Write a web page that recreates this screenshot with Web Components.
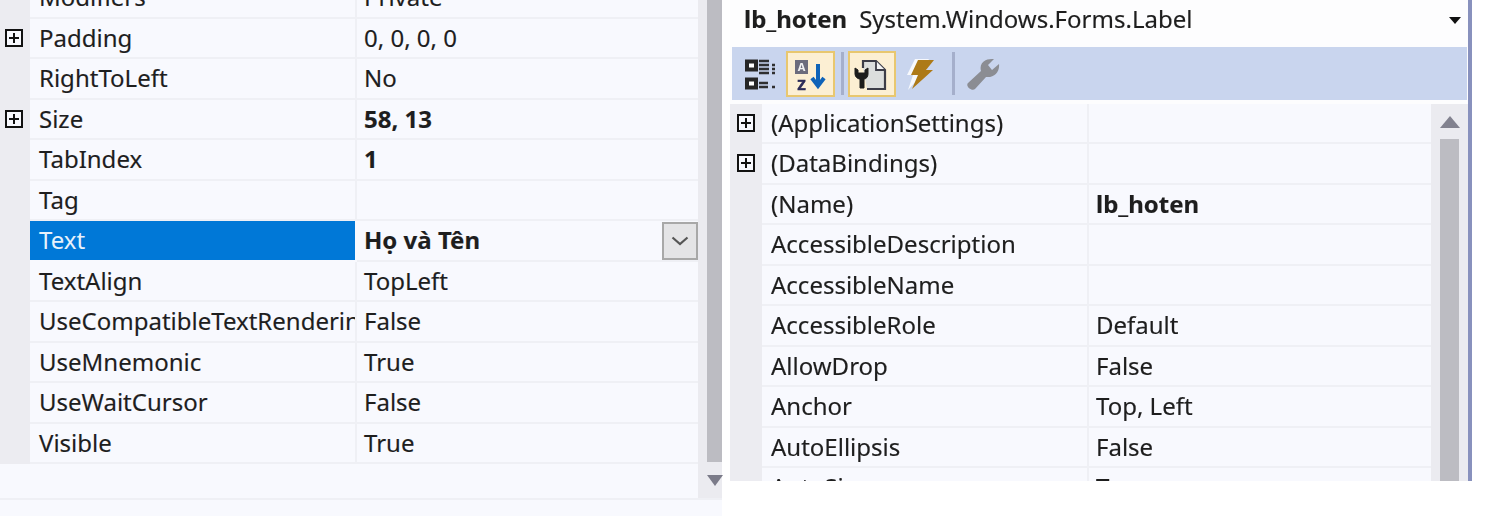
<!DOCTYPE html>
<html lang="en"><head><meta charset="utf-8"><title>Properties</title>
<style>
html,body{margin:0;padding:0;background:#fff;height:516px;overflow:hidden}
body{font-family:"Noto Sans","Open Sans",sans-serif;color:#1e1e1e}
</style></head><body>
<props-window>
<prop-panel slot="left" data-gutter="30" data-plus="5" style="--shift:-22px">
  <prop-row name="Modifiers" value="Private"></prop-row>
  <prop-row name="Padding" value="0, 0, 0, 0" expand></prop-row>
  <prop-row name="RightToLeft" value="No"></prop-row>
  <prop-row name="Size" value="58, 13" expand bold></prop-row>
  <prop-row name="TabIndex" value="1" bold></prop-row>
  <prop-row name="Tag" value=""></prop-row>
  <prop-row name="Text" value="Họ và Tên" bold selected></prop-row>
  <prop-row name="TextAlign" value="TopLeft"></prop-row>
  <prop-row name="UseCompatibleTextRendering" value="False"></prop-row>
  <prop-row name="UseMnemonic" value="True"></prop-row>
  <prop-row name="UseWaitCursor" value="False"></prop-row>
  <prop-row name="Visible" value="True"></prop-row>
</prop-panel>
<prop-header slot="right" object="lb_hoten" type="System.Windows.Forms.Label"></prop-header>
<prop-toolbar slot="right"></prop-toolbar>
<prop-panel slot="right" data-gutter="32" data-plus="7" data-scroll="up" style="--shift:0px">
  <prop-row name="(ApplicationSettings)" value="" expand></prop-row>
  <prop-row name="(DataBindings)" value="" expand></prop-row>
  <prop-row name="(Name)" value="lb_hoten" bold></prop-row>
  <prop-row name="AccessibleDescription" value=""></prop-row>
  <prop-row name="AccessibleName" value=""></prop-row>
  <prop-row name="AccessibleRole" value="Default"></prop-row>
  <prop-row name="AllowDrop" value="False"></prop-row>
  <prop-row name="Anchor" value="Top, Left"></prop-row>
  <prop-row name="AutoEllipsis" value="False"></prop-row>
  <prop-row name="AutoSize" value="True"></prop-row>
</prop-panel>
</props-window>
<script>
class PropsWindow extends HTMLElement{constructor(){super();this.attachShadow({mode:'open'}).innerHTML=`<style>
:host{display:grid;grid-template-columns:722px 8px 738px 4px;height:516px;align-items:start;filter:blur(.45px)}
.l{height:516px;display:flex;flex-direction:column;background:#f8f9fe}
.r{height:481px;display:flex;flex-direction:column;background:#fdfdfe;overflow:hidden}
.b{height:481px;background:#8891bd}
.foot{flex:1;border-top:2px solid #eff0f5}
</style>
<div class="l"><div class="top"><slot name="left"></slot></div><div class="foot"></div></div>
<div></div>
<div class="r"><slot name="right"></slot></div>
<div class="b"></div>`}}
customElements.define('props-window',PropsWindow);

class PropPanel extends HTMLElement{connectedCallback(){
 if(this.shadowRoot)return;
 const up=this.dataset.scroll==='up';
 this.style.setProperty('--g',this.dataset.gutter+'px');
 this.style.setProperty('--plus',this.dataset.plus+'px');
 this.attachShadow({mode:'open'}).innerHTML=`<style>
 :host{display:flex;height:${up?378:498}px;${up?'flex:1;min-height:0;padding-top:3.5px;':''}}
 .list{flex:1;min-width:0;overflow:hidden}
 .in{margin-top:var(--shift)}
 .sb{box-sizing:border-box;flex:none;display:flex;flex-direction:column;background:#ebebf0;${up?'width:37px;padding:0 9px':'width:24px;padding-left:9px'}}
 .t{background:#bcbcc2;flex:1}
 svg{display:block}
 </style>
 <div class="list"><div class="in"><slot></slot></div></div>
 <div class="sb">${up?`<svg width="20" height="35" viewBox="0 0 20 35"><path d="M10 12 20 24H0Z" fill="#82828f"/></svg><div class="t"></div>`:`<div class="t" style="flex:0 0 462px"></div><svg width="16" height="36" viewBox="0 0 16 36"><path d="M0 13H16L8 24Z" fill="#7b7b89"/></svg>`}</div>`;
}}
customElements.define('prop-panel',PropPanel);

class PropRow extends HTMLElement{connectedCallback(){
 if(this.shadowRoot)return;
 const a=k=>this.getAttribute(k),h=k=>this.hasAttribute(k);
 this.attachShadow({mode:'open'}).innerHTML=`<style>
 :host{display:grid;grid-template-columns:var(--g) 327px 1fr;height:40.5px;font:24px/38.5px "Noto Sans","Open Sans",sans-serif;color:#1e1e1e;-webkit-text-stroke:.15px currentColor}
 .g{display:flex;align-items:center;padding-left:var(--plus);box-sizing:border-box;padding-bottom:2px;background:#ececf1}
 .n,.v{box-sizing:border-box;min-width:0;background:#f8f9fe;border-bottom:2px solid #eff0f5;white-space:nowrap;overflow:hidden;padding-left:9px}
 .n{border-right:2px solid #eff0f5}
 .v{padding-left:7px;position:relative;font-weight:${h('bold')?700:400}}
 .sel{background:#0078d7;color:#e8f2fb;border-bottom-color:#f8f9fe;border-right-color:#f8f9fe;-webkit-text-stroke:0}
 .dd{position:absolute;right:0;top:1px;width:36px;height:38px;box-sizing:border-box;background:#e4e4e6;border:2px solid #a8a8a8;display:flex;align-items:center;justify-content:center}
 svg{display:block}
 </style>
 <div class="g">${h('expand')?`<svg width="18" height="18" viewBox="0 0 18 18"><rect x="1" y="1" width="16" height="16" fill="#f8f9fe" stroke="#111" stroke-width="2"/><path d="M4 9H14M9 4V14" stroke="#111" stroke-width="2"/></svg>`:''}</div>
 <div class="n${h('selected')?' sel':''}">${a('name')}</div>
 <div class="v">${a('value')}${h('selected')?`<span class="dd"><svg width="18" height="10" viewBox="0 0 18 10"><path d="M1.500 1.500 9 8 16.500 1.500" fill="none" stroke="#555" stroke-width="2.200"/></svg></span>`:''}</div>`;
}}
customElements.define('prop-row',PropRow);

class PropHeader extends HTMLElement{connectedCallback(){
 if(this.shadowRoot)return;
 this.attachShadow({mode:'open'}).innerHTML=`<style>
 :host{display:flex;height:47px;box-sizing:border-box;padding:0 7px 9px 14px;align-items:center;font:24px/38px "Noto Sans","Open Sans",sans-serif;color:#1e1e1e;white-space:nowrap;-webkit-text-stroke:.15px currentColor}
 b{margin-right:12px;font-weight:700}
 svg{margin-left:auto;margin-top:3px}
 </style><b>${this.getAttribute('object')}</b><span>${this.getAttribute('type')}</span>
 <svg width="12" height="7" viewBox="0 0 12 7"><path d="M0 0H12L6 7Z" fill="#111"/></svg>`;
}}
customElements.define('prop-header',PropHeader);

class PropToolbar extends HTMLElement{connectedCallback(){
 if(this.shadowRoot)return;
 this.attachShadow({mode:'open'}).innerHTML=`<style>
 :host{display:flex;height:53px;margin:0 1px 0 2px;background:#c9d5ee;align-items:center;box-sizing:border-box;padding:0 0 0 13px}
 .on{width:49px;height:46px;box-sizing:border-box;background:#fcefd3;border:2px solid #e8c76f;flex:none}
 .s{width:3px;height:43px;background:#a5afcb;flex:none}
 svg{display:block;flex:none}
 </style>
 <svg width="31" height="32" viewBox="0 0 31 32" style="margin-right:10px">
  <rect x="2" y="3.500" width="9" height="8" fill="#fff" stroke="#262626" stroke-width="4"/>
  <rect x="2" y="21.500" width="9" height="8" fill="#fff" stroke="#262626" stroke-width="4"/>
  <path d="M14 3H24M14 7H24M14 11H24M14 15H24M14 25H23M14 29H23" stroke="#2f2f2f" stroke-width="2.600"/>
  <path d="M27 7H30M27 11H30M27 15H30M27 29H30" stroke="#2f2f2f" stroke-width="2.600"/></svg>
 <div class="on"><svg width="45" height="42" viewBox="0 0 45 42">
  <rect x="7" y="7" width="13" height="14" fill="#6c6c7c"/>
  <text x="13.500" y="18" font-family="Noto Sans" font-size="11" font-weight="700" text-anchor="middle" fill="#f2f2f2">A</text>
  <text x="13.500" y="37" font-family="Noto Sans" font-size="14" font-weight="700" text-anchor="middle" fill="#2b2b58" stroke="#2b2b58" stroke-width=".6">Z</text>
  <path d="M30 11V32M24 25 30 33 36 25" fill="none" stroke="#0f63b8" stroke-width="4"/></svg></div>
 <div class="s" style="margin:0 4px 0 6px"></div>
 <div class="on" style="width:48px"><svg width="44" height="42" viewBox="0 0 44 42">
  <path d="M13 15V8H26L35 17V36H17" fill="#dcdedd" stroke="#3d3d48" stroke-width="2.200"/><path d="M26 8V17H35" fill="#f4f4f4" stroke="#3d3d48" stroke-width="1.800"/>
  <path d="M5 15V21C5 24 8 26 10 26V35H14V26C16 26 18 24 18 21V15L15 17V20H8V17Z" fill="#1c1c1c" stroke="#1c1c1c"/></svg></div>
 <svg width="31" height="34" viewBox="0 0 31 34" style="margin-left:10px">
  <path d="M9 2H23L17 12H21L2 33 7 18H1Z" fill="#fff" opacity=".85"/>
  <path d="M12 3H28L20 13H27L6 32 12 18H5Z" fill="#ad7a18"/></svg>
 <div class="s" style="margin:0 11px 0 15px"></div>
 <svg width="34" height="34" viewBox="0 0 34 34">
  <path d="M2 26 15 14C13 7 18 1 28 2L22 8 26 13 33 7C34 15 28 21 20 20L9 32C6 35 -1 29 2 26Z" fill="#8b8d93"/></svg>`;
}}
customElements.define('prop-toolbar',PropToolbar);
</script>
</body></html>
